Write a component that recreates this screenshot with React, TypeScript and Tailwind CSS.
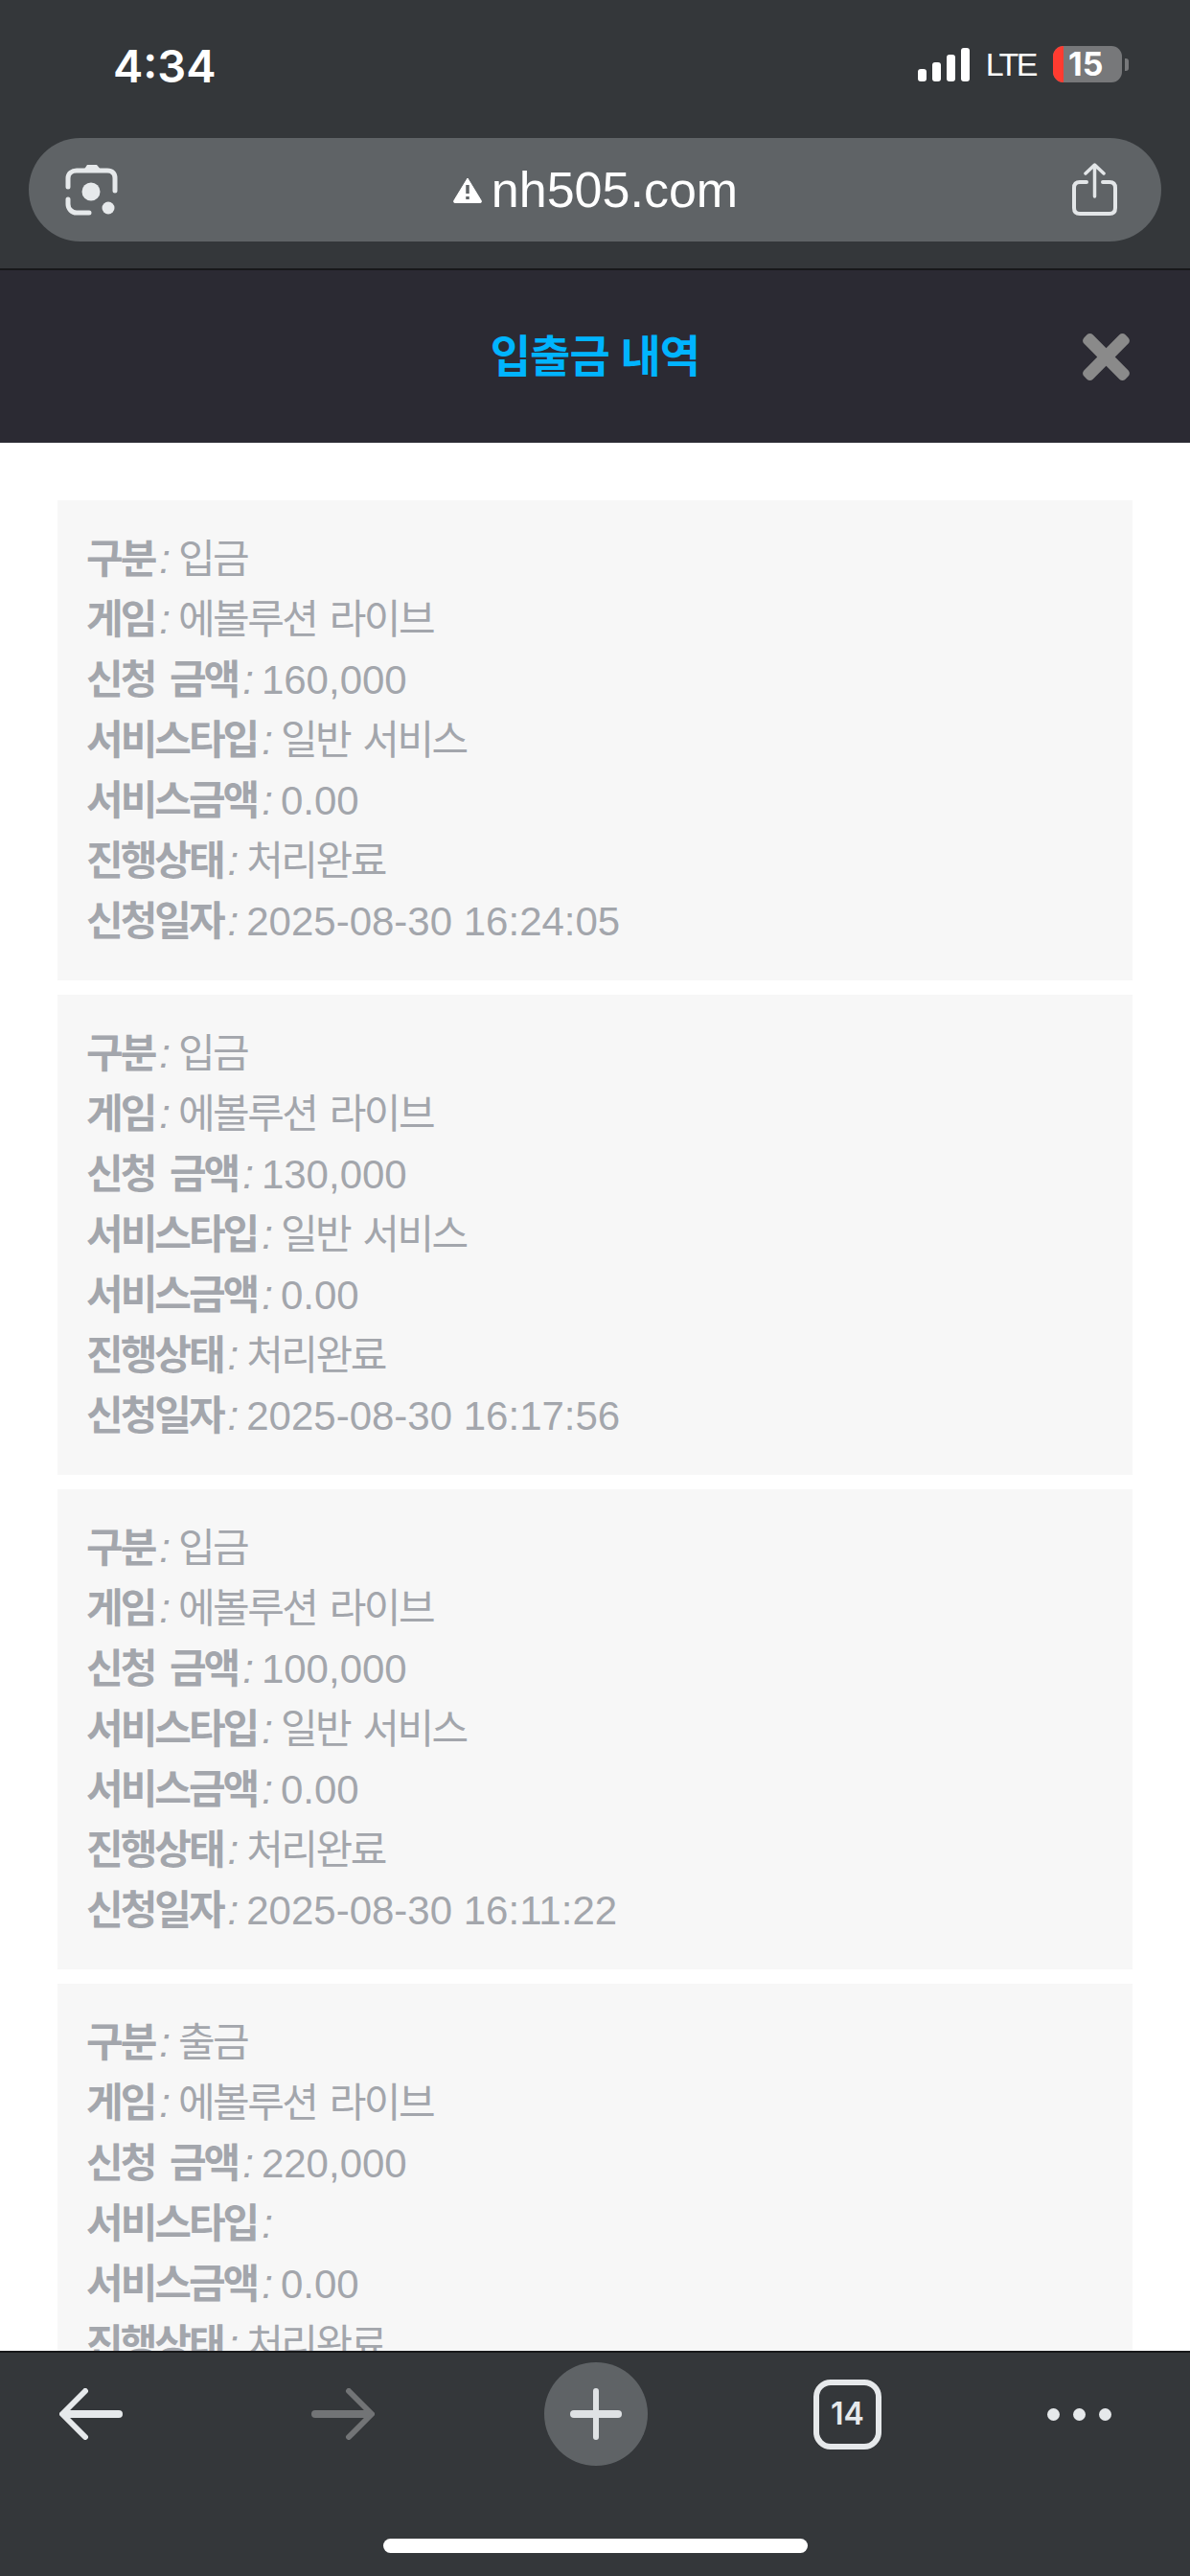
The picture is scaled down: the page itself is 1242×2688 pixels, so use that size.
import { FaTimes } from 'react-icons/fa'

const records = [
  { type: '입금', amount: '160,000', service: '일반 서비스', date: '2025-08-30 16:24:05' },
  { type: '입금', amount: '130,000', service: '일반 서비스', date: '2025-08-30 16:17:56' },
  { type: '입금', amount: '100,000', service: '일반 서비스', date: '2025-08-30 16:11:22' },
  { type: '출금', amount: '220,000', service: '', date: '2025-08-30 15:48:10' },
]

function Row({ label, value, korean }: { label: string; value: string; korean?: boolean }) {
  return (
    <div className="h-[63px] leading-[63px] whitespace-nowrap">
      <span className="font-bold tracking-[-3px] [word-spacing:7px]">{label}</span>
      <span className="italic ml-[5px] mr-[8px]">:</span>
      <span className={korean ? 'tracking-[-2.5px] [word-spacing:4px]' : ''}>{value}</span>
    </div>
  )
}

function LensIcon() {
  return (
    <svg width="55" height="55" viewBox="0 0 55 55" fill="none">
      <path d="M19 7 L23 1 H33 L38 7 Z" fill="#e6e9eb" />
      <path d="M3 24 V15 C3 10 7 7 12 7 H44 C49 7 52 10 52 15 V28" stroke="#e6e9eb" strokeWidth="5" strokeLinecap="round" />
      <path d="M3 37 V42 C3 47 7 51 12 51 H25" stroke="#e6e9eb" strokeWidth="5" strokeLinecap="round" />
      <circle cx="27" cy="29" r="9.5" fill="#e6e9eb" />
      <circle cx="45" cy="46" r="6.5" fill="#e6e9eb" />
    </svg>
  )
}

function ShareIcon() {
  return (
    <svg width="47" height="56" viewBox="0 0 47 56" fill="none" stroke="#e3e6e8" strokeLinecap="round" strokeLinejoin="round">
      <path d="M15 20 H8 C4 20 2 22 2 26 V47 C2 51 4 53 8 53 H39 C43 53 45 51 45 47 V26 C45 22 43 20 39 20 H32" strokeWidth="4" />
      <path d="M23.5 35 V3 M14 11 L23.5 2 L33 11" strokeWidth="3.5" />
    </svg>
  )
}

function Arrow({ color, flip }: { color: string; flip?: boolean }) {
  return (
    <svg width="66" height="54" viewBox="0 0 66 54" fill="none" stroke={color} strokeLinecap="round" strokeLinejoin="round" className={flip ? '-scale-x-100' : ''}>
      <path d="M27 3 L3 27 L27 51" strokeWidth="6" />
      <path d="M6 27 H62" strokeWidth="8" />
    </svg>
  )
}

export default function App() {
  return (
    <div className="h-[2688px] w-[1242px] flex flex-col overflow-hidden bg-white font-['Liberation_Sans','Noto_Sans_CJK_KR',sans-serif]">
      {/* browser chrome */}
      <div className="h-[282px] shrink-0 bg-[#34373a] border-b-2 border-[#17181a]">
        <div className="h-[144px] flex items-start justify-between pl-[118px] pr-[64px] pt-[41px]">
          <span className="text-[47px] leading-[55px] font-semibold text-white font-['Inter',sans-serif]">4:34</span>
          <div className="flex items-center h-[46px] mt-[3px]">
            <div className="flex items-end gap-[6px] h-[35px]">
              <div className="w-[9px] h-[13px] rounded-[3px] bg-white" />
              <div className="w-[9px] h-[20px] rounded-[3px] bg-white" />
              <div className="w-[9px] h-[28px] rounded-[3px] bg-white" />
              <div className="w-[9px] h-[35px] rounded-[3px] bg-white" />
            </div>
            <span className="ml-[17px] text-[34px] leading-[40px] tracking-[-2.5px] text-white">LTE</span>
            <div className="ml-[18px] w-[72px] h-[38px] rounded-[11px] bg-[#77787a] overflow-hidden flex">
              <div className="w-[11px] bg-[#ff3b30]" />
              <span className="ml-[5px] text-[34px] leading-[38px] font-bold text-white font-['Inter',sans-serif]">15</span>
            </div>
            <div className="ml-[3px] w-[4px] h-[13px] rounded-r-[3px] bg-[#77787a]" />
          </div>
        </div>
        <div className="mx-[30px] h-[108px] rounded-[54px] bg-[#5f6366] flex items-center justify-between pl-[38px] pr-[46px]">
          <LensIcon />
          <div className="flex items-center gap-[9px] text-white">
            <svg width="32" height="28" viewBox="0 0 32 28">
              <path d="M16 2 L30 25 C31 27 30 28 28 28 H4 C2 28 1 27 2 25 Z" fill="#fff" stroke="#fff" strokeLinejoin="round" />
              <path d="M16 9 V18 M16 21 V24" stroke="#5f6366" strokeWidth="3.5" />
            </svg>
            <span className="text-[52px] leading-[60px]">nh505.com</span>
          </div>
          <ShareIcon />
        </div>
      </div>

      {/* page header */}
      <div className="h-[180px] shrink-0 bg-[#2b2a33] flex items-center relative">
        <h1 className="w-full text-center text-[46px] font-bold tracking-[-1px] text-[#00b4ff]">입출금 내역</h1>
        <FaTimes className="absolute right-[52px] top-[55px] text-[#8a8a8a]" size={71} />
      </div>

      {/* records */}
      <main className="flex-1 min-h-0 overflow-hidden px-[60px] pt-[60px] flex flex-col gap-[15px]">
        {records.map((r) => (
          <div key={r.date} className="shrink-0 h-[501px] bg-[#f7f7f7] pl-[30px] pt-[30px] text-[42px] text-[#a3a6ac]">
            <Row label="구분" value={r.type} korean />
            <Row label="게임" value="에볼루션 라이브" korean />
            <Row label="신청 금액" value={r.amount} />
            <Row label="서비스타입" value={r.service} korean />
            <Row label="서비스금액" value="0.00" />
            <Row label="진행상태" value="처리완료" korean />
            <Row label="신청일자" value={r.date} />
          </div>
        ))}
      </main>

      {/* bottom toolbar */}
      <div className="h-[235px] shrink-0 bg-[#34373a] border-t-2 border-[#17181a] flex flex-col">
        <div className="flex items-center pl-[62px] h-[120px] pt-[8px]">
          <Arrow color="#e6e9eb" />
          <div className="ml-[197px]">
            <Arrow color="#727476" flip />
          </div>
          <div className="ml-[177px] w-[108px] h-[108px] rounded-full bg-[#5f6366] flex items-center justify-center relative">
            <div className="w-[54px] h-[8px] rounded-full bg-[#dfe2e4]" />
            <div className="absolute w-[6px] h-[54px] rounded-full bg-[#dfe2e4]" />
          </div>
          <div className="ml-[173px] w-[71px] h-[73px] rounded-[18px] border-[6px] border-[#e6e9eb] flex items-center justify-center text-[32px] font-semibold text-[#e6e9eb] font-['Inter',sans-serif]">
            14
          </div>
          <div className="ml-[173px] flex gap-[14px]">
            <div className="w-[13px] h-[13px] rounded-full bg-[#e6e9eb]" />
            <div className="w-[13px] h-[13px] rounded-full bg-[#e6e9eb]" />
            <div className="w-[13px] h-[13px] rounded-full bg-[#e6e9eb]" />
          </div>
        </div>
        <div className="mt-[74px] mx-auto w-[443px] h-[15px] rounded-full bg-white" />
      </div>
    </div>
  )
}
